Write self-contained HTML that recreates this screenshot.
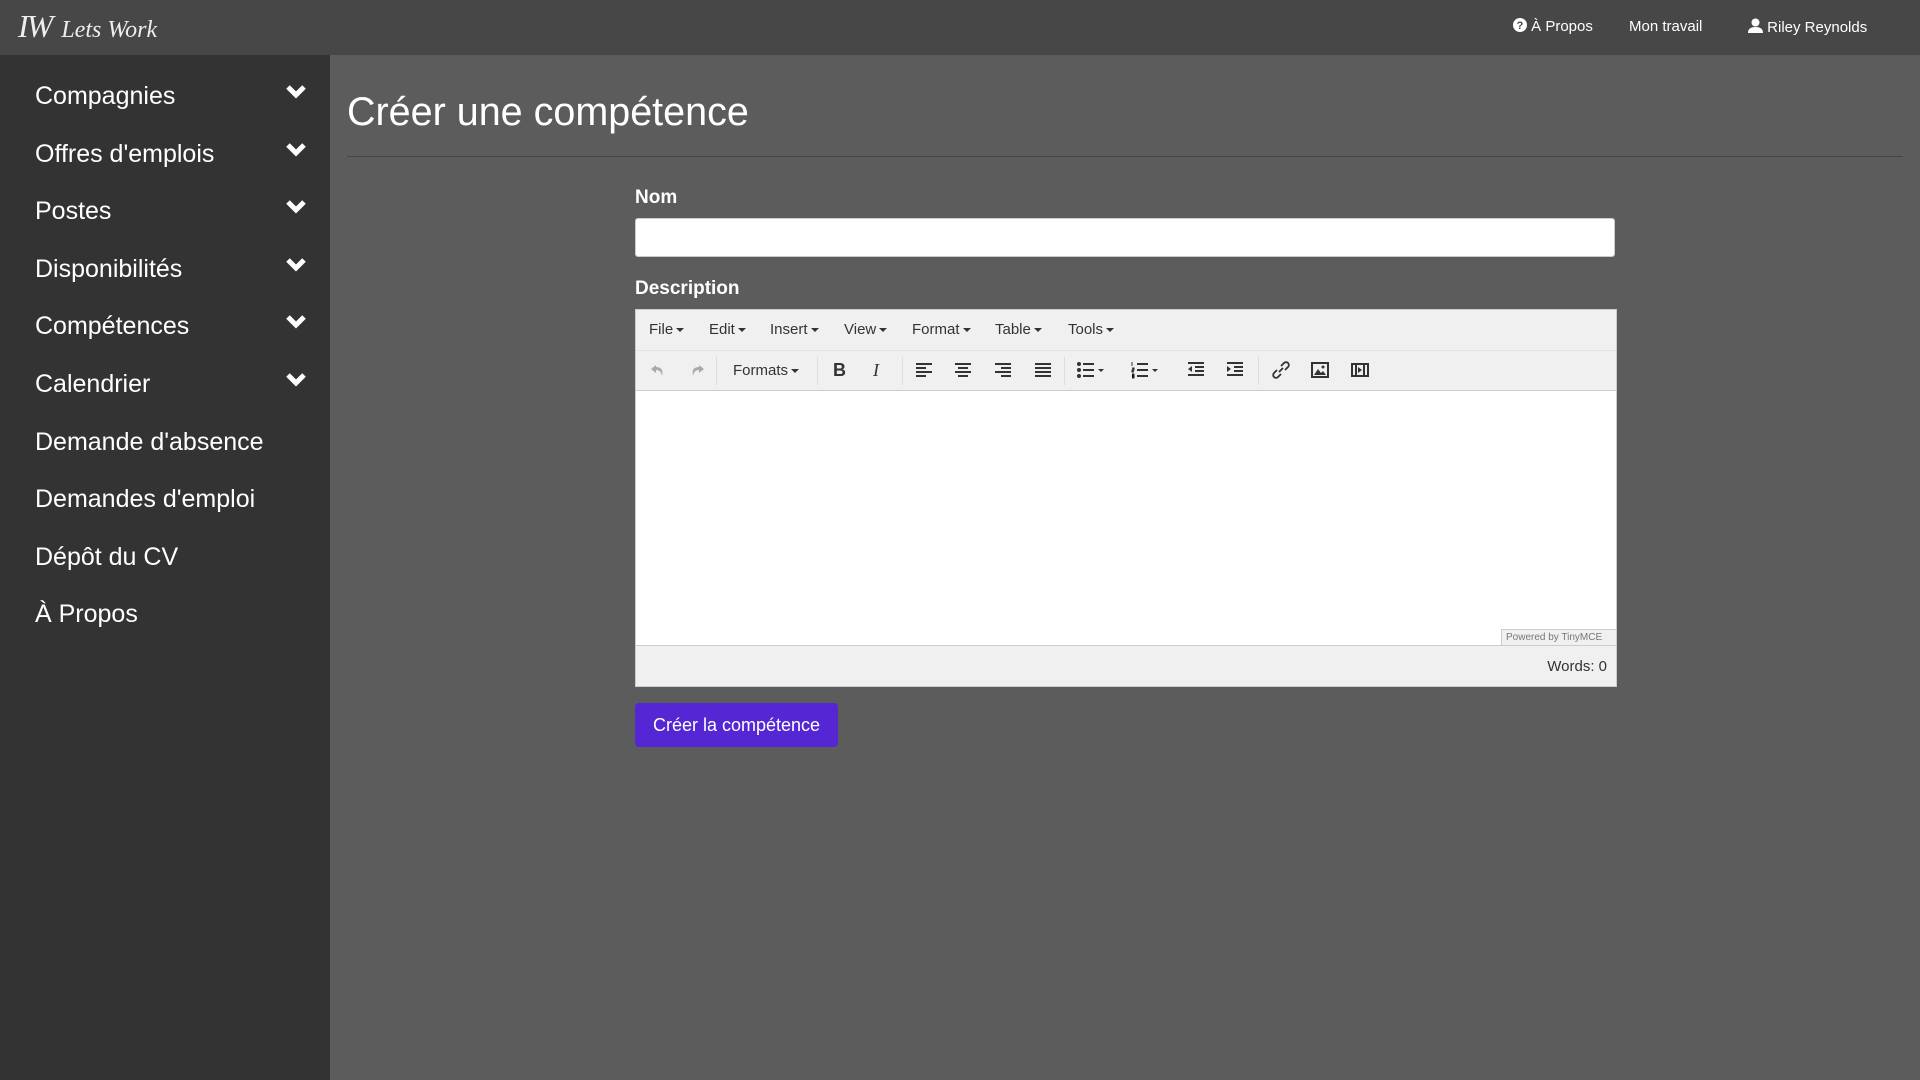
<!DOCTYPE html>
<html><head><meta charset="utf-8"><style>
*{box-sizing:border-box;margin:0;padding:0}
body{width:1920px;height:1080px;background:#5c5c5c;font-family:"Liberation Sans",sans-serif;position:relative;overflow:hidden;color:#fff}
.nav{position:absolute;left:0;top:0;width:1920px;height:55px;background:#474747}
.logo{position:absolute;left:18px;top:8px;font-family:"Liberation Serif",serif;font-style:italic;color:#eee;white-space:nowrap}
.nav a{position:absolute;top:18px;font-size:15px;color:#fff}
.side{position:absolute;left:0;top:55px;width:330px;height:1025px;background:#333}
.side div{position:absolute;left:35px;font-size:25px;color:#fff}
.chev{position:absolute;left:285px}
h1{position:absolute;left:347px;top:90px;font-size:39.5px;font-weight:normal}
.hr{position:absolute;left:347px;top:156px;width:1556px;height:1px;background:#444}
.lbl{position:absolute;left:635px;font-size:19px;font-weight:bold}
.inp{position:absolute;left:635px;top:218px;width:980px;height:39px;background:#fff;border-radius:3px;border:1px solid #ccc}
.ed{position:absolute;left:635px;top:309px;width:982px;height:378px;background:#f0f0f0;border:1px solid #ccc}
.menu span{position:absolute;top:11px;font-size:15px;color:#333}
.tb{position:absolute;top:40px;left:0;width:980px;height:40px;border-top:1px solid #e2e2e2}
.tb .s{position:absolute;top:6px;width:1px;height:28px;background:#ddd}
.tb .i{position:absolute;top:10px}
.content{position:absolute;left:0;top:80px;width:980px;height:256px;background:#fff;border-top:1px solid #ccc;border-bottom:1px solid #ccc}
.btn{position:absolute;left:635px;top:703px;width:203px;height:44px;background:#5527d4;border-radius:4px;font-size:18px;text-align:center;line-height:44px}
.dd{display:inline-block;border-left:4px solid transparent;border-right:4px solid transparent;border-top:4px solid #333;vertical-align:middle;margin-left:3px}
</style></head><body>
<div class="nav">
<div class="logo"><span style="font-size:32px;letter-spacing:-2px">IW</span> <span style="font-size:24px;margin-left:6px">Lets Work</span></div>
<a style="left:1513px"><svg width="14" height="14" viewBox="0 0 14 14" style="vertical-align:-1px"><circle cx="7" cy="7" r="7" fill="#fff"/><text x="7" y="11" font-size="11" font-weight="bold" text-anchor="middle" fill="#474747" font-family="Liberation Sans">?</text></svg> À Propos</a>
<a style="left:1629px">Mon travail</a>
<a style="left:1748px"><svg width="15" height="15" viewBox="0 0 15 15" style="vertical-align:-1px"><circle cx="7.5" cy="4.5" r="4" fill="#fff"/><path d="M0 15 Q0 9 7.5 9 Q15 9 15 15Z" fill="#fff"/></svg> Riley Reynolds</a>
</div>
<div class="side">
<div style="top:27px">Compagnies</div>
<div style="top:85px">Offres d'emplois</div>
<div style="top:142px">Postes</div>
<div style="top:200px">Disponibilités</div>
<div style="top:257px">Compétences</div>
<div style="top:315px">Calendrier</div>
<div style="top:373px">Demande d'absence</div>
<div style="top:430px">Demandes d'emploi</div>
<div style="top:488px">Dépôt du CV</div>
<div style="top:545px">À Propos</div>
<svg class="chev" style="top:29px" width="22" height="16" viewBox="0 0 22 16"><path d="M3 3 L11 11 L19 3" stroke="#fff" stroke-width="5" fill="none"/></svg>
<svg class="chev" style="top:87px" width="22" height="16" viewBox="0 0 22 16"><path d="M3 3 L11 11 L19 3" stroke="#fff" stroke-width="5" fill="none"/></svg>
<svg class="chev" style="top:144px" width="22" height="16" viewBox="0 0 22 16"><path d="M3 3 L11 11 L19 3" stroke="#fff" stroke-width="5" fill="none"/></svg>
<svg class="chev" style="top:202px" width="22" height="16" viewBox="0 0 22 16"><path d="M3 3 L11 11 L19 3" stroke="#fff" stroke-width="5" fill="none"/></svg>
<svg class="chev" style="top:259px" width="22" height="16" viewBox="0 0 22 16"><path d="M3 3 L11 11 L19 3" stroke="#fff" stroke-width="5" fill="none"/></svg>
<svg class="chev" style="top:317px" width="22" height="16" viewBox="0 0 22 16"><path d="M3 3 L11 11 L19 3" stroke="#fff" stroke-width="5" fill="none"/></svg>
</div>
<h1>Créer une compétence</h1>
<div class="hr"></div>
<div class="lbl" style="top:187px">Nom</div>
<div class="inp"></div>
<div class="lbl" style="top:278px">Description</div>
<div class="ed">
<div class="menu">
<span style="left:13px">File<i class="dd"></i></span><span style="left:73px">Edit<i class="dd"></i></span><span style="left:134px">Insert<i class="dd"></i></span><span style="left:208px">View<i class="dd"></i></span><span style="left:276px">Format<i class="dd"></i></span><span style="left:359px">Table<i class="dd"></i></span><span style="left:432px">Tools<i class="dd"></i></span>
</div>
<div class="tb">
<svg class="i" style="left:14px" width="16" height="18"><path d="M6 4 L1 8 L6 12 V9 Q11 9 12 15 Q14 6 6 6Z" fill="#aaa"/></svg>
<svg class="i" style="left:53px" width="16" height="18"><path d="M10 4 L15 8 L10 12 V9 Q5 9 4 15 Q2 6 10 6Z" fill="#aaa"/></svg>
<div class="s" style="left:80px"></div>
<span style="position:absolute;left:97px;top:11px;font-size:15px;color:#333">Formats<i class="dd"></i></span>
<div class="s" style="left:181px"></div>
<span style="position:absolute;left:197px;top:9px;font-size:18px;font-weight:bold;color:#333">B</span>
<span style="position:absolute;left:237px;top:9px;font-size:18px;font-style:italic;font-family:'Liberation Serif',serif;color:#333">I</span>
<div class="s" style="left:266px"></div>
<svg class="i" style="left:279px" width="18" height="18"><path d="M1 3h16M1 7h10M1 11h16M1 15h10" stroke="#333" stroke-width="2"/></svg>
<svg class="i" style="left:318px" width="18" height="18"><path d="M1 3h16M4 7h10M1 11h16M4 15h10" stroke="#333" stroke-width="2"/></svg>
<svg class="i" style="left:358px" width="18" height="18"><path d="M1 3h16M7 7h10M1 11h16M7 15h10" stroke="#333" stroke-width="2"/></svg>
<svg class="i" style="left:398px" width="18" height="18"><path d="M1 3h16M1 7h16M1 11h16M1 15h16" stroke="#333" stroke-width="2"/></svg>
<div class="s" style="left:428px"></div>
<svg class="i" style="left:441px" width="28" height="18"><path d="M6 3h11M6 9h11M6 15h11" stroke="#333" stroke-width="2"/><circle cx="2" cy="3" r="2" fill="#333"/><circle cx="2" cy="9" r="2" fill="#333"/><circle cx="2" cy="15" r="2" fill="#333"/><path d="M21 8h6l-3 3z" fill="#333"/></svg>
<svg class="i" style="left:495px" width="28" height="18"><path d="M6 3h11M6 9h11M6 15h11" stroke="#333" stroke-width="2"/><path d="M1 1v4M1 7h2v2h-2v2h2M1 13h2v4h-2" stroke="#333" stroke-width="1"/><path d="M21 8h6l-3 3z" fill="#333"/></svg>
<svg class="i" style="left:551px" width="18" height="18"><path d="M1 2h16M8 6h9M8 10h9M1 14h16" stroke="#333" stroke-width="2"/><path d="M5 5L1 8L5 11z" fill="#333"/></svg>
<svg class="i" style="left:590px" width="18" height="18"><path d="M1 2h16M8 6h9M8 10h9M1 14h16" stroke="#333" stroke-width="2"/><path d="M1 5L5 8L1 11z" fill="#333"/></svg>
<div class="s" style="left:622px"></div>
<svg class="i" style="left:636px" width="18" height="18"><path d="M7 11l4-4M5 9l-3 3a2.5 2.5 0 0 0 4 4l3-3M13 9l3-3a2.5 2.5 0 0 0-4-4l-3 3" stroke="#333" stroke-width="1.8" fill="none"/></svg>
<svg class="i" style="left:675px" width="18" height="18"><rect x="1" y="2" width="16" height="14" fill="none" stroke="#333" stroke-width="2"/><path d="M3 14l4-6 3 4 2-2 3 4z" fill="#333"/><circle cx="12" cy="6" r="1.5" fill="#333"/></svg>
<svg class="i" style="left:715px" width="18" height="18"><rect x="1" y="3" width="16" height="12" fill="none" stroke="#333" stroke-width="2"/><path d="M5 3v12M13 3v12" stroke="#333" stroke-width="2"/><path d="M7 6l4 3-4 3z" fill="#333"/></svg>
</div>
<div class="content"></div>
<div style="position:absolute;right:0;top:319px;width:115px;height:17px;background:#f0f0f0;border:1px solid #ccc;border-right:none;font-size:10px;color:#777;line-height:15px;padding-left:4px">Powered by TinyMCE</div>
<div style="position:absolute;right:9px;top:348px;font-size:15px;color:#333">Words: 0</div>
</div>
<div class="btn">Créer la compétence</div>
</body></html>
